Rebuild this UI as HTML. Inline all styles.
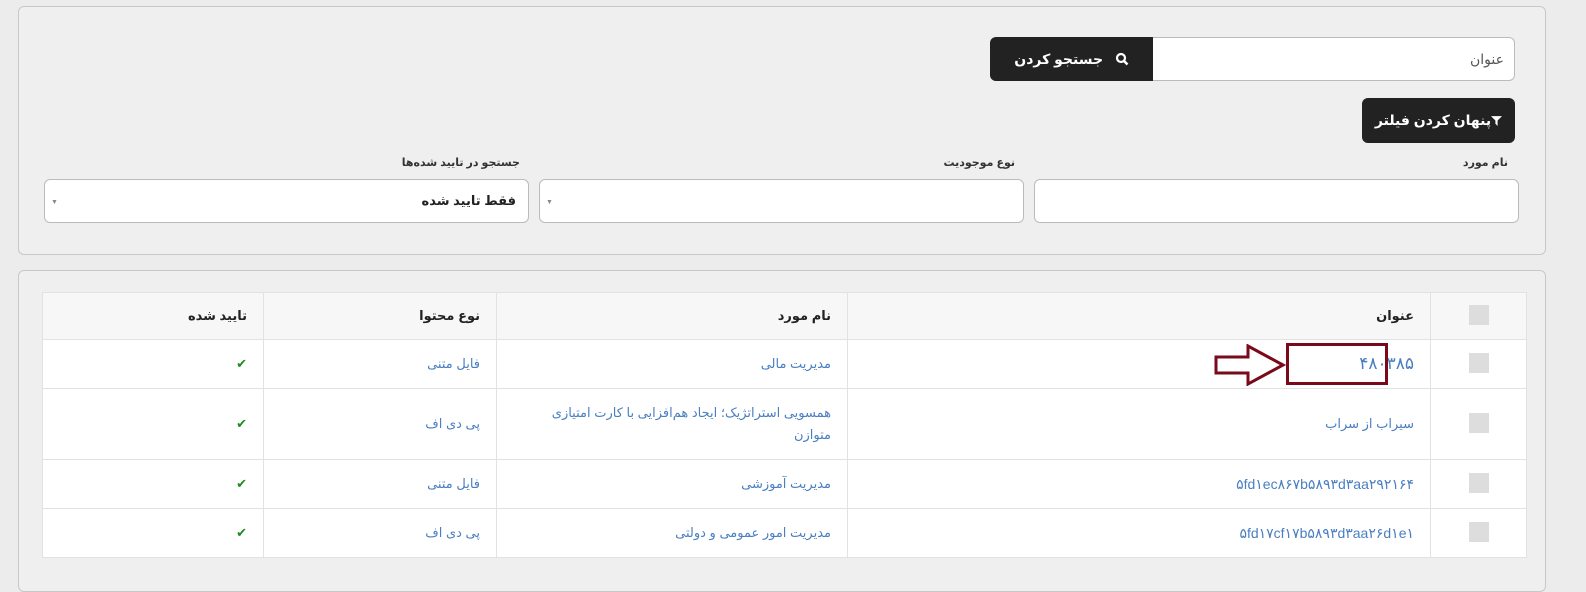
<!DOCTYPE html>
<html dir="rtl"><head><meta charset="utf-8"><style>
body{margin:0;width:1586px;height:564px;overflow:hidden;background:#ececec;font-family:"Liberation Sans","DejaVu Sans",sans-serif;font-size:13px;color:#222;position:relative}
.a{position:absolute}
.panel{border:1px solid #c8c8c8;border-radius:6px;background:#efefef}
.inp{background:#fff;border:1px solid #bbb;border-radius:6px;box-sizing:border-box}
.btn{background:#222;color:#fff;font-weight:bold;font-size:14px;display:flex;align-items:center;justify-content:center;box-sizing:border-box}
.lbl{font-size:11px;font-weight:bold;color:#333}
table{border-collapse:collapse;background:#fff;font-size:13px}
td,th{border:1px solid #e2e2e2;text-align:right;padding:0 16px}
th{background:#f7f7f7;font-weight:bold;height:46px;color:#222}
td{color:#4a7fc1}
.cb{display:inline-block;width:20px;height:20px;background:#ddd}
.ck{color:#1f8a1f;font-weight:bold}
</style></head><body>
<div class="a panel" style="left:18px;top:6px;width:1526px;height:247px"></div>
<div class="a inp" style="left:1150px;top:37px;width:365px;height:44px;border-radius:0 6px 6px 0;text-align:right;padding:13px 10px;color:#555;font-size:14px">عنوان</div>
<div class="a btn" style="left:990px;top:37px;width:163px;height:44px;border-radius:6px 0 0 6px"><svg width="14" height="14" viewBox="0 0 14 14"><circle cx="6" cy="6" r="4" fill="none" stroke="#fff" stroke-width="2.2"/><path d="M9 9l3.5 3.5" stroke="#fff" stroke-width="2.5"/></svg>&nbsp;&nbsp;&nbsp;جستجو کردن</div>
<div class="a btn" style="left:1362px;top:98px;width:153px;height:45px;border-radius:6px"><svg width="11" height="11" viewBox="0 0 10 10"><path d="M0 1h10L6 5v5L4 8V5z" fill="#fff"/></svg>پنهان کردن فیلتر</div>
<div class="a lbl" style="left:1440px;top:156px;width:68px">نام مورد</div>
<div class="a lbl" style="left:900px;top:156px;width:115px">نوع موجودیت</div>
<div class="a lbl" style="left:380px;top:156px;width:140px">جستجو در تایید شده‌ها</div>
<div class="a inp" style="left:1034px;top:179px;width:485px;height:44px"></div>
<div class="a inp" style="left:539px;top:179px;width:485px;height:44px"><span class="a" style="left:6px;top:19px;font-size:7px;color:#888">▼</span></div>
<div class="a inp" style="left:44px;top:179px;width:485px;height:44px;font-weight:bold;padding:13px 12px"> فقط تایید شده<span class="a" style="left:6px;top:19px;font-size:7px;color:#888">▼</span></div>
<div class="a panel" style="left:18px;top:270px;width:1526px;height:320px"></div>
<table class="a" style="left:42px;top:292px;width:1485px">
<tr><th style="width:63px;text-align:center"><span class="cb"></span></th><th style="width:550px">عنوان</th><th style="width:318px">نام مورد</th><th style="width:200px">نوع محتوا</th><th>تایید شده</th></tr>
<tr style="height:49px"><td style="text-align:center"><span class="cb"></span></td><td style="font-size:17px;letter-spacing:1px">۴۸۰۳۸۵</td><td>مدیریت مالی</td><td>فایل متنی</td><td class="ck">✔</td></tr>
<tr style="height:71px"><td style="text-align:center"><span class="cb"></span></td><td>سیراب از سراب</td><td style="line-height:22px">همسویی استراتژیک؛ ایجاد هم‌افزایی با کارت امتیازی متوازن</td><td>پی دی اف</td><td class="ck">✔</td></tr>
<tr style="height:49px"><td style="text-align:center"><span class="cb"></span></td><td style="font-size:14px">۵fd۱ec۸۶۷b۵۸۹۳d۳aa۲۹۲۱۶۴</td><td>مدیریت آموزشی</td><td>فایل متنی</td><td class="ck">✔</td></tr>
<tr style="height:49px"><td style="text-align:center"><span class="cb"></span></td><td style="font-size:14px">۵fd۱۷cf۱۷b۵۸۹۳d۳aa۲۶d۱e۱</td><td>مدیریت امور عمومی و دولتی</td><td>پی دی اف</td><td class="ck">✔</td></tr>
</table>
<div class="a" style="left:1286px;top:343px;width:102px;height:42px;border:3px solid #7a0a1a;box-sizing:border-box"></div>
<svg class="a" style="left:1214px;top:344px" width="72" height="42" viewBox="0 0 72 42"><path d="M2 13H34V2L69 21L34 40V29H2Z" fill="#fff" stroke="#7a0a1a" stroke-width="3"/></svg>
</body></html>
